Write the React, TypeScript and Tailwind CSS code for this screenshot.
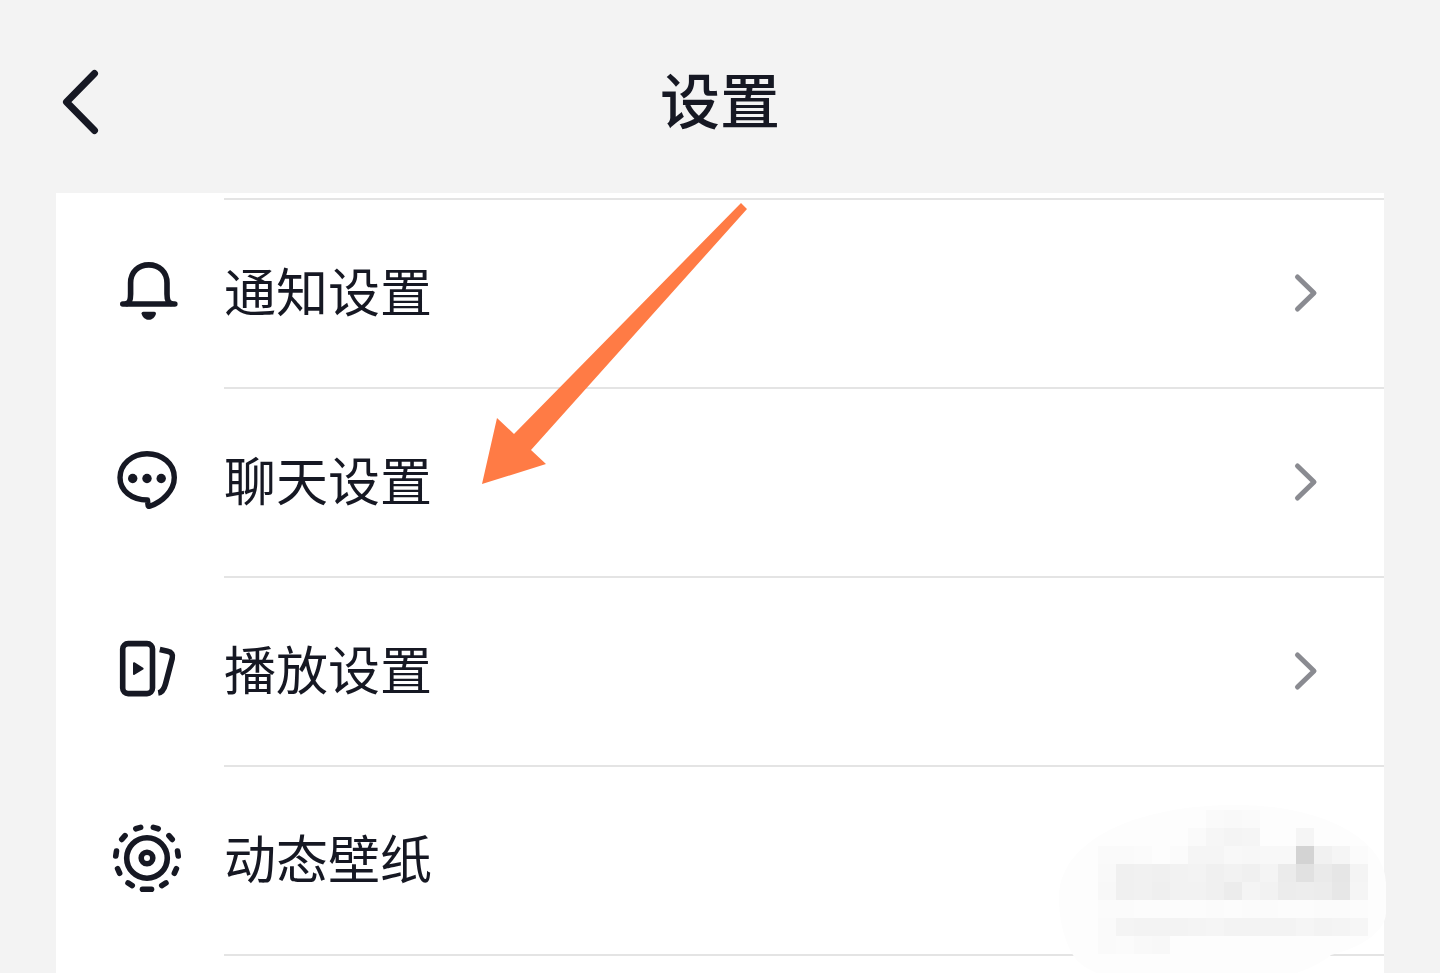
import type { ReactNode } from "react";

const INK = "#161823";

function BellIcon() {
  return (
    <svg viewBox="0 0 73 73" className="size-[73px]" fill="none" stroke={INK} strokeWidth="5.6" strokeLinecap="round" strokeLinejoin="round" aria-hidden="true">
      <path d="M11.8 47H63.8" />
      <path d="M16 46.5C19 45.5 19.6 42 19.6 37V26C19.6 15 27.5 7.9 37.8 7.9S56 15 56 26V37C56 42 56.8 45.5 60 46.5" />
      <path d="M30.5 56.5Q30.5 54.8 32.3 54.8H43.3Q45 54.8 45 56.5C44 60.5 41 62.8 37.8 62.8S31.5 60.5 30.5 56.5Z" fill={INK} stroke="none" />
    </svg>
  );
}

function ChatIcon() {
  return (
    <svg viewBox="0 0 73 73" className="size-[73px]" fill="none" stroke={INK} strokeWidth="5.4" strokeLinejoin="round" aria-hidden="true">
      <path d="M36.5 54C20.500 54 9 44.5 9 31.5S21 7.7 36 7.7S63.3 17.5 63.3 31.5C63.3 44.5 51.5 56 38.800 60.2Q37 60.8 37 59Z" />
      <g fill={INK} stroke="none">
        <circle cx="21.7" cy="32.5" r="4.7" />
        <circle cx="36" cy="32.5" r="4.7" />
        <circle cx="50.2" cy="32.5" r="4.7" />
      </g>
    </svg>
  );
}

function PlaybackIcon() {
  return (
    <svg viewBox="0 0 73 73" className="size-[73px]" fill="none" stroke={INK} strokeWidth="5.6" aria-hidden="true">
      <rect x="11.7" y="8.6" width="29.8" height="50" rx="5.5" />
      <path d="M48.8 14.5L56.5 16.2Q62.8 17.5 61.2 23.5L54.5 49Q52.3 57.2 47.2 58" />
      <path d="M23 28.2L31.6 33.6L23 39Z" fill={INK} strokeWidth="2" strokeLinejoin="round" />
    </svg>
  );
}

const DASHES = Array.from({ length: 11 }, (_, i) => i);

function WallpaperIcon() {
  return (
    <svg viewBox="0 0 73 73" className="size-[73px]" fill="none" stroke={INK} strokeWidth="5.6" strokeLinecap="round" aria-hidden="true">
      <circle cx="36" cy="34" r="20.3" />
      <circle cx="36" cy="34" r="5.8" />
      {DASHES.map((i) => (
        <path key={i} d={i === 0 ? "M31.5 65.2H40.5" : "M33.5 65.2H38.5"} transform={`rotate(${(i * 360) / 11} 36 34)`} />
      ))}
    </svg>
  );
}

function Chevron() {
  return (
    <svg viewBox="0 0 28 42" className="h-[42px] w-7" fill="none" stroke="#8a8b91" strokeWidth="5" strokeLinecap="round" strokeLinejoin="round" aria-hidden="true">
      <path d="M5.500 4L22 20L5.500 36" />
    </svg>
  );
}

type Item = { label: string; icon: ReactNode; chevron: boolean };

const ITEMS: Item[] = [
  { label: "通知设置", icon: <BellIcon />, chevron: true },
  { label: "聊天设置", icon: <ChatIcon />, chevron: true },
  { label: "播放设置", icon: <PlaybackIcon />, chevron: true },
  { label: "动态壁纸", icon: <WallpaperIcon />, chevron: false },
];

function SettingsRow({ label, icon, chevron }: Item) {
  return (
    <li>
      <button type="button" className="flex w-full text-left">
        <span className="flex w-[168px] shrink-0 items-center pt-0.5 pl-[55px]">{icon}</span>
        <span className="flex h-[189px] grow items-center justify-between border-t-2 border-[#e4e4e4] pr-16">
          <span className="pb-2 text-[52px] leading-[76px]">{label}</span>
          {chevron && <Chevron />}
        </span>
      </button>
    </li>
  );
}

function Arrow() {
  return (
    <svg viewBox="0 0 280 290" className="pointer-events-none absolute top-[199px] left-[476px] h-[290px] w-[280px]" aria-hidden="true">
      <path d="M6 285L21 219L38 235L265 4L271 10L55 251L70 265Z" fill="#ff7b45" />
    </svg>
  );
}

// One string per row of 18px cells; each pair of hex digits is a grey level.
const MOSAIC = [
  ".. .. .. .. .. .. fa f9 fa",
  ".. .. .. .. .. fa f6 f4 f5 .. .. f5",
  "fa fa fb .. fb f5 f5 f8 f7 f8 f8 d3 f1 f5 fb",
  "f9 f0 f1 f0 f2 f3 f0 f2 f0 f4 eb e1 ea e6 f4",
  "f8 f0 f1 ef f2 f2 f0 ec f4 f2 ec ed ec e7 f5",
  "fb fb fc fc fc fc fb fc fb fb fc fc fb fb fc",
  "fa f4 f3 f3 f3 f4 f5 f3 f3 f3 f3 f5 f3 f4 f6",
  "fa fb f9 f8",
].map((row) => row.split(" "));

function Mosaic() {
  return (
    <svg viewBox="0 0 328 170" className="pointer-events-none absolute top-[803px] right-[53px] h-[170px] w-[328px]" aria-hidden="true">
      <path d="M0 95C0 40 70 4 170 2C260 0 326 35 327 80V110C326 130 300 145 272 152C262 160 245 170 215 176H60C35 172 20 162 14 152C4 135 0 115 0 95Z" fill="#fdfdfd" />
      {MOSAIC.map((row, y) =>
        row.map((grey, x) =>
          grey === ".." ? null : (
            <rect key={`${x}-${y}`} x={39 + x * 18} y={7 + y * 18} width="18" height="18" fill={`#${grey}${grey}${grey}`} />
          ),
        ),
      )}
    </svg>
  );
}

export default function App() {
  return (
    <div className="relative flex min-h-screen flex-col overflow-hidden bg-[#f3f3f3] px-14 font-['Noto_Sans_CJK_SC','Noto_Sans',sans-serif] text-[#161823]">
      <header className="grid h-[193px] grid-cols-[1fr_auto_1fr] items-center pb-[14px]">
        <button type="button" aria-label="返回" className="justify-self-start pt-6">
          <svg viewBox="0 0 48 70" className="h-[70px] w-12" fill="none" stroke={INK} strokeWidth="7" strokeLinecap="round" strokeLinejoin="round" aria-hidden="true">
            <path d="M38.5 6.500L10.500 35L38.5 63.500" />
          </svg>
        </button>
        <h1 className="pt-4 text-[60px] leading-[88px] font-medium">设置</h1>
      </header>
      <main className="grow bg-white pt-[5px]">
        <ul>
          {ITEMS.map((item) => (
            <SettingsRow key={item.label} {...item} />
          ))}
        </ul>
        <div className="ml-[168px] h-[19px] border-t-2 border-[#e4e4e4]" />
      </main>
      <Arrow />
      <Mosaic />
    </div>
  );
}
